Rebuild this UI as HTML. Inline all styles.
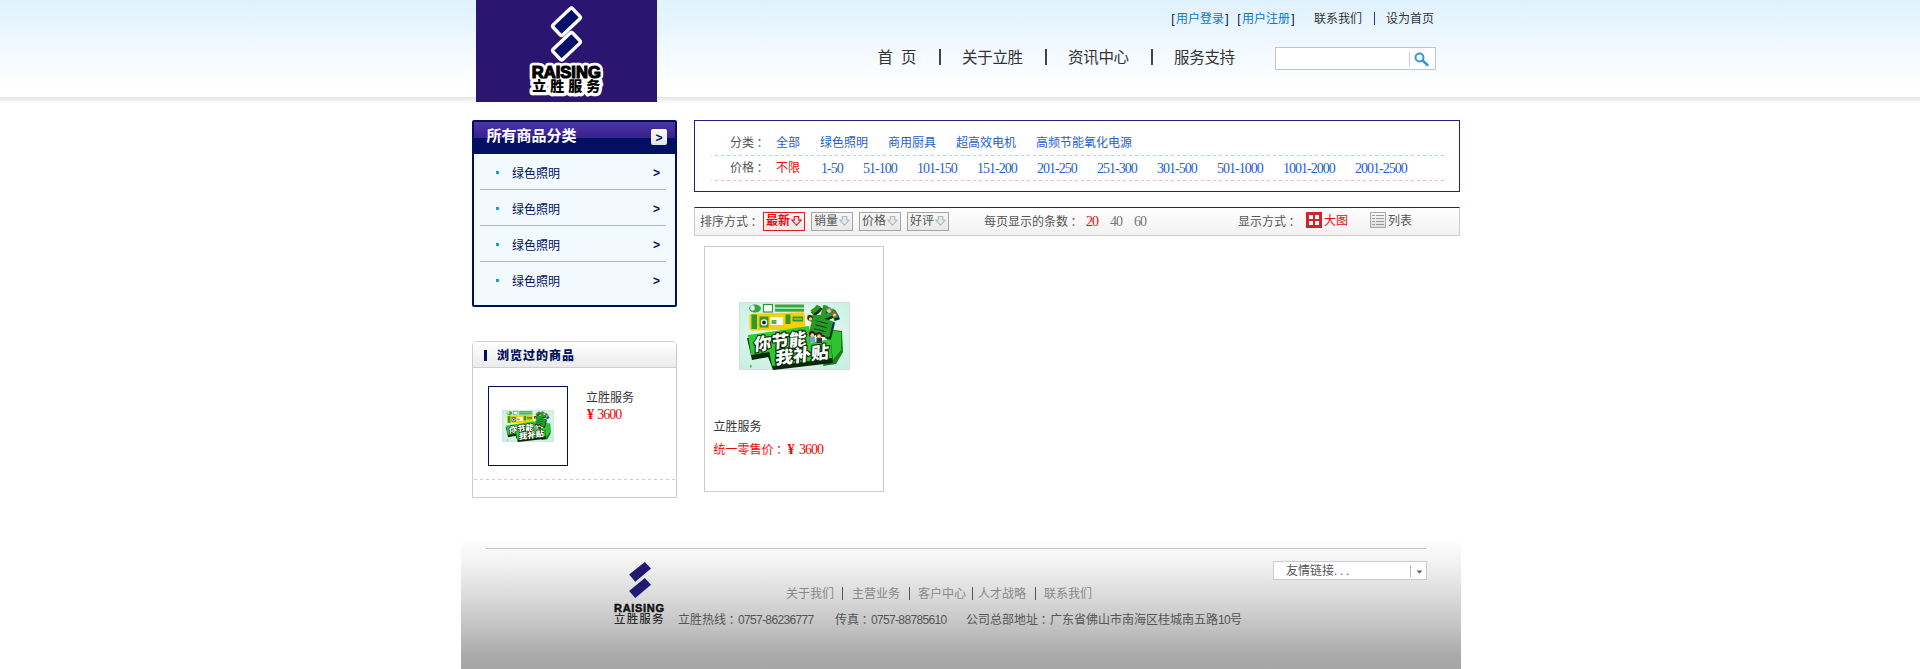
<!DOCTYPE html>
<html lang="zh-CN">
<head>
<meta charset="utf-8">
<title>立胜服务 - 商品列表</title>
<style>
*{margin:0;padding:0;box-sizing:border-box;}
html,body{width:100%;height:669px;overflow:hidden;background:#fff;}
body{font-family:"Liberation Sans","Noto Sans CJK SC",sans-serif;font-size:12px;color:#333;position:relative;}
a{text-decoration:none;color:inherit;}
.abs{position:absolute;white-space:nowrap;}
.serif{font-family:"Liberation Serif","Noto Serif CJK SC",serif;font-size:14px;letter-spacing:-1px;}
#hdr{position:absolute;left:0;top:0;width:100%;height:97px;background:linear-gradient(to bottom,#e0f2fe 0px,#e8f5fe 25px,#f2f9ff 50px,#fbfdff 75px,#ffffff 88px,#ffffff 97px);}
#hdrshadow{position:absolute;left:0;top:97px;width:100%;height:6px;background:linear-gradient(to bottom,#e3e3e3,#f1f1f1 50%,#ffffff);}
#wrap{position:absolute;left:50%;margin-left:-500px;top:0;width:1000px;height:669px;}
/* coordinates inside wrap are page x minus 460 */
#logo{position:absolute;left:16px;top:0;width:181px;height:102px;background:#2a1571;}
.bk{display:inline-block;width:6px;text-align:center;}
.toplinks{top:12px;font-size:12px;line-height:14px;color:#333;}
.nav{top:48px;font-size:15.5px;line-height:20px;color:#333;letter-spacing:-0.3px;}
.navsep{position:absolute;top:49px;width:2px;height:16px;background:#444;}
#search{position:absolute;left:815px;top:47px;width:161px;height:23px;border:1px solid #c4c4c4;background:#fff;}
#search i{position:absolute;left:133px;top:4px;width:1px;height:14px;background:#ccc;}
/* sidebar */
#cat{position:absolute;left:12px;top:120px;width:205px;height:187px;border:2px solid #00105e;border-radius:2px;background:#f2f9ff;}
#cat .hd{position:absolute;left:0;top:0;width:201px;height:32px;background:linear-gradient(to bottom,#4e33a5 0px,#37228e 15.500px,#030f62 16.500px,#030f62 32px);}
#cat .hd b{position:absolute;left:12.500px;top:4px;font-size:15px;line-height:20px;color:#fff;font-weight:bold;}
#cat .hd span{position:absolute;left:177px;top:7px;width:16px;height:16px;border-radius:2px;background:linear-gradient(#fff,#e2e2e2);color:#00105e;font-size:12px;line-height:18px;text-align:center;font-weight:bold;overflow:hidden;}
#cat .it{position:absolute;left:6px;width:186px;height:36px;border-bottom:1px solid #aab3da;}
#cat .it:last-child{border-bottom:none;}
#cat .it i{position:absolute;left:16px;top:17px;width:3px;height:3px;background:#1a9de0;}
#cat .it a{position:absolute;left:32px;top:12px;line-height:16px;color:#00105e;font-size:12px;}
#cat .it em{position:absolute;left:173px;top:11px;line-height:16px;color:#00105e;font-style:normal;font-size:12px;font-weight:bold;}
/* viewed */
#viewed{position:absolute;left:12px;top:341px;width:205px;height:157px;border:1px solid #ccc;border-radius:5px 5px 0 0;background:#fff;}
#viewed .hd{position:absolute;left:0;top:0;width:203px;height:26px;border-bottom:1px solid #d0d0d0;border-radius:4px 4px 0 0;background:linear-gradient(#ffffff,#ebebeb);}
#viewed .hd i{position:absolute;left:11px;top:8px;width:3px;height:11px;background:#00105e;}
#viewed .hd b{position:absolute;left:24px;top:6px;line-height:16px;font-size:12px;color:#00105e;letter-spacing:1px;font-weight:900;}
#viewed .th{position:absolute;left:15px;top:44px;width:80px;height:80px;border:1px solid #00105e;background:#fff;}
#viewed .dash{position:absolute;left:1px;top:137px;width:201px;height:1px;background:repeating-linear-gradient(to right,#cdcdcd 0,#cdcdcd 3px,transparent 3px,transparent 6px);}
/* filter */
#filter{position:absolute;left:234px;top:120px;width:766px;height:72px;border:1px solid #2b1d80;background:#fff;}
#filter .dl{position:absolute;left:16px;width:733px;height:1px;background:repeating-linear-gradient(to right,#f3b4c9 0,#f3b4c9 3px,transparent 3px,transparent 6px);background-position:-2px 0;}
.f1{top:135px;line-height:16px;}
.f2{top:160px;line-height:16px;}
.blue{color:#1c5fd3;}
.red{color:#ee0808;}
.gray{color:#555;}
/* sortbar */
#sort{position:absolute;left:234px;top:207px;width:766px;height:29px;border:1px solid #ccc;border-top:1px solid #2b1d80;background:linear-gradient(#ffffff,#f1f1f1);}
.sbtn{position:absolute;top:212px;width:42px;height:19px;border:1px solid #a4a4a4;background:linear-gradient(#f6f6f6,#e9e9e9);font-size:12px;color:#555;}
.sbtn span{position:absolute;left:2px;top:0px;line-height:16px;white-space:nowrap;}
.sbtn svg{position:absolute;left:27px;top:3px;}
.sbtn.on{border-color:#e21c1c;color:#ee0808;font-weight:bold;}
.s1{top:213px;line-height:16px;}
/* card */
#card{position:absolute;left:244px;top:246px;width:180px;height:246px;border:1px solid #ccc;background:#fff;}
/* footer */
#foot{position:absolute;left:1px;top:539px;width:1000px;height:130px;background:linear-gradient(to bottom,#ffffff 0px,#f9f9f9 9px,#f3f3f3 22px,#dcdcdc 56px,#c0c0c0 91px,#a9a9a9 117px,#a6a6a6 130px);}
#foot .ln{position:absolute;left:25px;top:9px;width:940px;height:1px;background:#c4c4c4;}
#sel{position:absolute;left:813px;top:561px;width:154px;height:19px;border:1px solid #ccc;background:#fff;}
#sel i{position:absolute;left:136px;top:3px;width:1px;height:12px;background:#bbb;}
.num{letter-spacing:-0.670px;}
.cl{position:relative;left:2.500px;}
.yen{font-family:"Liberation Serif",serif;font-size:14px;}
.fsep{position:absolute;top:587px;width:1px;height:13px;background:#555;}
.fl{top:586px;line-height:16px;color:#888;}
.fi{top:612px;line-height:16px;color:#555;}
</style>
</head>
<body>
<div id="hdr"></div>
<div id="hdrshadow"></div>
<div id="wrap">

<div id="logo">
<svg width="181" height="102" viewBox="0 0 181 102">
 <g stroke="#fff" stroke-width="3.400" fill="#06126a">
  <rect x="-13.500" y="-7" width="27" height="14" rx="2" transform="translate(90.500 21.800) rotate(-43.500)"/>
  <rect x="-13.500" y="-7" width="27" height="14" rx="2" transform="translate(90.500 46.200) rotate(-43.500)"/>
 </g>
 <g stroke="#fff" stroke-width="6.500" stroke-linejoin="round" fill="#fff" text-anchor="middle">
  <text x="90.300" y="77.600" font-family="Liberation Sans, sans-serif" font-weight="bold" font-size="17" textLength="69" lengthAdjust="spacingAndGlyphs">RAISING</text>
  <text x="90.300" y="90.800" font-family="Noto Sans CJK SC, sans-serif" font-weight="900" font-size="14" textLength="68" lengthAdjust="spacing">立胜服务</text>
 </g>
 <g fill="#000" text-anchor="middle">
  <text x="90.300" y="77.600" font-family="Liberation Sans, sans-serif" font-weight="bold" font-size="17" stroke="#000" stroke-width="1.200" textLength="69" lengthAdjust="spacingAndGlyphs">RAISING</text>
  <text x="90.300" y="90.800" font-family="Noto Sans CJK SC, sans-serif" font-weight="900" font-size="14" textLength="68" lengthAdjust="spacing">立胜服务</text>
 </g>
</svg>
</div>

<div class="abs toplinks" style="left:710px;color:#00105e"><span class="bk">[</span><a style="color:#0a78c8">用户登录</a><span class="bk">]</span></div>
<div class="abs toplinks" style="left:776px;color:#00105e"><span class="bk">[</span><a style="color:#0a78c8">用户注册</a><span class="bk">]</span></div>
<div class="abs toplinks" style="left:854px">联系我们</div>
<div class="abs" style="left:914px;top:12px;width:1px;height:13px;background:#3a2d8a"></div>
<div class="abs toplinks" style="left:926px">设为首页</div>

<div class="abs nav" style="left:417.500px">首</div><div class="abs nav" style="left:441px">页</div>
<div class="navsep" style="left:479px"></div>
<div class="abs nav" style="left:502px">关于立胜</div>
<div class="navsep" style="left:585px"></div>
<div class="abs nav" style="left:608px">资讯中心</div>
<div class="navsep" style="left:691px"></div>
<div class="abs nav" style="left:714px">服务支持</div>

<div id="search"><i></i>
<svg style="position:absolute;left:137px;top:3px" width="18" height="16" viewBox="0 0 18 16"><circle cx="6.500" cy="6.500" r="4" fill="none" stroke="#3398d6" stroke-width="2"/><path d="M9.500 9.500 L14.500 14" stroke="#3398d6" stroke-width="2.600" stroke-linecap="round"/></svg>
</div>

<!-- sidebar -->
<div id="cat">
 <div class="hd"><b>所有商品分类</b><span>&gt;</span></div>
 <div class="it" style="top:32px"><i></i><a>绿色照明</a><em>&gt;</em></div>
 <div class="it" style="top:68px"><i></i><a>绿色照明</a><em>&gt;</em></div>
 <div class="it" style="top:104px"><i></i><a>绿色照明</a><em>&gt;</em></div>
 <div class="it" style="top:140px"><i></i><a>绿色照明</a><em>&gt;</em></div>
</div>

<div id="viewed">
 <div class="hd"><i></i><b>浏览过的商品</b></div>
 <div class="th"><svg style="position:absolute;left:13px;top:23px" width="52" height="32" viewBox="0 0 111 68" preserveAspectRatio="none">
<defs><radialGradient id="pbg2" cx="0.5" cy="0.45" r="0.7"><stop offset="0" stop-color="#f6fdf9"/><stop offset="1" stop-color="#c6f0df"/></radialGradient></defs>
<rect width="111" height="68" fill="#dcdcdc"/>
<rect x="1" y="1" width="109" height="66" fill="url(#pbg2)"/>
<ellipse cx="16" cy="6.500" rx="6" ry="4" fill="#3aa53a"/><ellipse cx="13.500" cy="6" rx="2.200" ry="2.800" fill="#eaf7ea"/>
<rect x="24.500" y="2.500" width="9" height="7.500" fill="#fff" stroke="#2c9a2c" stroke-width="1.200"/>
<rect x="36" y="2.500" width="29" height="3" fill="#39a83c"/><rect x="36" y="6.700" width="29" height="3" fill="#39a83c"/>
<rect x="10.500" y="11" width="55.500" height="17" rx="2.500" fill="#f2d10a" transform="rotate(-1.500 38 19)"/>
<rect x="12.500" y="12.500" width="5.500" height="14.500" fill="#2f9a2f"/>
<rect x="20.500" y="14.500" width="9" height="11" fill="#2f9a2f"/><circle cx="25" cy="20.500" r="3.200" fill="#fff"/><circle cx="25" cy="20.500" r="1.900" fill="#222"/>
<rect x="31.500" y="15" width="12.500" height="8" fill="#fff"/><rect x="32.500" y="18" width="5" height="4" fill="#55b548"/>
<rect x="46.500" y="12.500" width="5" height="9.500" fill="#2f9a2f"/>
<rect x="53.500" y="14.500" width="10.500" height="5" fill="#2f9a2f"/><rect x="54.500" y="16.500" width="8.500" height="1" fill="#f2d10a"/>
<polygon points="88,27 103,29 104,50 97,62 84,64 88,50" fill="#1d7d1f"/>
<polygon points="90,28 102,30 102,48 94,58 86,60 91,47" fill="#2fc42f"/>
<polygon points="8,36 70,26 72,47 13,58" fill="#072607"/>
<polygon points="28,52 92,40 94,61 34,68" fill="#072607"/>
<polygon points="9,33 70,24 71,43 12,53" fill="#2ecb2e"/>
<polygon points="30,48 92,37 93,56 33,64" fill="#2ecb2e"/>
<text x="84.200" y="31.400" text-anchor="middle" font-family="Noto Sans CJK SC, sans-serif" font-weight="900" font-size="32" fill="#0a2e0e" stroke="#0a2e0e" stroke-width="0.800" transform="rotate(14 82 20)">省</text><text x="82.500" y="30" text-anchor="middle" font-family="Noto Sans CJK SC, sans-serif" font-weight="900" font-size="32" fill="#259a25" transform="rotate(14 82 20)">省</text>
<circle cx="71" cy="16" r="2.800" fill="#3a2a1a"/><circle cx="71.500" cy="17" r="1.700" fill="#f4c9a4"/>
<circle cx="90" cy="8" r="2.800" fill="#8a8a8a"/><circle cx="90" cy="9" r="1.800" fill="#f4c9a4"/>
<circle cx="95.500" cy="12" r="2.600" fill="#a05a20"/><circle cx="95.500" cy="13" r="1.600" fill="#f4c9a4"/>
<circle cx="73" cy="32" r="3" fill="#2a1a10"/><circle cx="73.300" cy="33.200" r="1.900" fill="#f4c9a4"/><rect x="70.500" y="35" width="5.500" height="5" fill="#6aa6c8"/>
<circle cx="80" cy="33" r="3" fill="#3a2418"/><circle cx="80" cy="34.200" r="1.900" fill="#f4c9a4"/><rect x="77.500" y="36" width="5.500" height="5" fill="#333"/>
<g font-family="Noto Sans CJK SC, sans-serif" font-weight="900" fill="#fff" stroke="#072607" stroke-width="2.200" stroke-linejoin="round" paint-order="stroke">
<text x="0" y="0" font-size="17" transform="translate(14.500 49) rotate(-7) skewX(-10)" textLength="53" lengthAdjust="spacingAndGlyphs">你节能</text>
<text x="0" y="0" font-size="17" transform="translate(36 62.500) rotate(-7) skewX(-10)" textLength="54" lengthAdjust="spacingAndGlyphs">我补贴</text>
</g>
<rect x="11" y="63" width="1.500" height="2.500" fill="#5aa83a"/>
</svg></div>
 <div class="abs" style="left:113px;top:48px;line-height:16px;color:#333">立胜服务</div>
 <div class="abs red" style="left:114px;top:65px;line-height:16px"><b class="yen">¥</b> <span class="serif">3600</span></div>
 <div class="dash"></div>
</div>

<!-- filter -->
<div id="filter">
 <div class="dl" style="top:34px"></div>
 <div class="dl" style="top:59px"></div>
</div>
<div class="abs f1 gray" style="left:270px">分类<span class="cl">：</span></div>
<div class="abs f1 blue" style="left:316px">全部</div>
<div class="abs f1 blue" style="left:360px">绿色照明</div>
<div class="abs f1 blue" style="left:428px">商用厨具</div>
<div class="abs f1 blue" style="left:496px">超高效电机</div>
<div class="abs f1 blue" style="left:576px">高频节能氧化电源</div>
<div class="abs f2 gray" style="left:270px">价格<span class="cl">：</span></div>
<div class="abs f2 red" style="left:316px">不限</div>
<div class="abs f2 blue serif" style="left:361px;top:161px">1-50</div>
<div class="abs f2 blue serif" style="left:403px;top:161px">51-100</div>
<div class="abs f2 blue serif" style="left:457px;top:161px">101-150</div>
<div class="abs f2 blue serif" style="left:517px;top:161px">151-200</div>
<div class="abs f2 blue serif" style="left:577px;top:161px">201-250</div>
<div class="abs f2 blue serif" style="left:637px;top:161px">251-300</div>
<div class="abs f2 blue serif" style="left:697px;top:161px">301-500</div>
<div class="abs f2 blue serif" style="left:757px;top:161px">501-1000</div>
<div class="abs f2 blue serif" style="left:823px;top:161px">1001-2000</div>
<div class="abs f2 blue serif" style="left:895px;top:161px">2001-2500</div>

<!-- sort bar -->
<div id="sort"></div>
<div class="abs s1" style="left:240px;top:214px;color:#555">排序方式<span class="cl">：</span></div>
<div class="sbtn on" style="left:303px"><span>最新</span><svg width="11" height="10" viewBox="0 0 12 11"><path d="M3.500 0.500H8.500V4.500H11.200L6 10.200L0.800 4.500H3.500Z" fill="#d6e2ea" stroke="#dc1e1e" stroke-width="1.200"/></svg></div>
<div class="sbtn" style="left:351px"><span>销量</span><svg width="11" height="10" viewBox="0 0 12 11"><path d="M3.500 0.500H8.500V4.500H11.200L6 10.200L0.800 4.500H3.500Z" fill="#e2eaee" stroke="#b9b9b9" stroke-width="1.200"/></svg></div>
<div class="sbtn" style="left:399px"><span>价格</span><svg width="11" height="10" viewBox="0 0 12 11"><path d="M3.500 0.500H8.500V4.500H11.200L6 10.200L0.800 4.500H3.500Z" fill="#e2eaee" stroke="#b9b9b9" stroke-width="1.200"/></svg></div>
<div class="sbtn" style="left:447px"><span>好评</span><svg width="11" height="10" viewBox="0 0 12 11"><path d="M3.500 0.500H8.500V4.500H11.200L6 10.200L0.800 4.500H3.500Z" fill="#e2eaee" stroke="#b9b9b9" stroke-width="1.200"/></svg></div>
<div class="abs s1" style="left:524px;top:214px;color:#555">每页显示的条数<span class="cl">：</span></div>
<div class="abs s1 serif red" style="left:626px;top:214px">20</div>
<div class="abs s1 serif" style="left:650px;top:214px;color:#777">40</div>
<div class="abs s1 serif" style="left:674px;top:214px;color:#777">60</div>
<div class="abs s1" style="left:778px;top:214px;color:#555">显示方式<span class="cl">：</span></div>
<svg class="abs" style="left:846px;top:212px" width="16" height="16" viewBox="0 0 16 16"><rect width="16" height="16" fill="#d0232a"/><rect x="3" y="3" width="4" height="4" fill="#fff"/><rect x="9" y="3" width="4" height="4" fill="#fff"/><rect x="3" y="9" width="4" height="4" fill="#fff"/><rect x="9" y="9" width="4" height="4" fill="#fff"/></svg>
<div class="abs s1" style="left:864px;color:#ee0808">大图</div>
<svg class="abs" style="left:910px;top:212px" width="16" height="16" viewBox="0 0 16 16"><defs><linearGradient id="lg1" x1="0" y1="0" x2="0" y2="1"><stop offset="0" stop-color="#fbfbfb"/><stop offset="1" stop-color="#dcdcdc"/></linearGradient></defs><rect x="0.500" y="0.500" width="15" height="15" fill="url(#lg1)" stroke="#a9a9a9"/><g fill="#9a9a9a"><rect x="2" y="3" width="3" height="1"/><rect x="6" y="3" width="8" height="1"/><rect x="2" y="6" width="3" height="1"/><rect x="6" y="6" width="8" height="1"/><rect x="2" y="9" width="3" height="1"/><rect x="6" y="9" width="8" height="1"/><rect x="2" y="12" width="3" height="1"/><rect x="6" y="12" width="8" height="1"/></g></svg>
<div class="abs s1" style="left:928px;color:#555">列表</div>

<!-- card -->
<div id="card"></div>
<svg class="abs" style="left:279px;top:302px" width="111" height="68" viewBox="0 0 111 68" preserveAspectRatio="none">
<defs><radialGradient id="pbg1" cx="0.5" cy="0.45" r="0.7"><stop offset="0" stop-color="#f6fdf9"/><stop offset="1" stop-color="#c6f0df"/></radialGradient></defs>
<rect width="111" height="68" fill="#dcdcdc"/>
<rect x="1" y="1" width="109" height="66" fill="url(#pbg1)"/>
<ellipse cx="16" cy="6.500" rx="6" ry="4" fill="#3aa53a"/><ellipse cx="13.500" cy="6" rx="2.200" ry="2.800" fill="#eaf7ea"/>
<rect x="24.500" y="2.500" width="9" height="7.500" fill="#fff" stroke="#2c9a2c" stroke-width="1.200"/>
<rect x="36" y="2.500" width="29" height="3" fill="#39a83c"/><rect x="36" y="6.700" width="29" height="3" fill="#39a83c"/>
<rect x="10.500" y="11" width="55.500" height="17" rx="2.500" fill="#f2d10a" transform="rotate(-1.500 38 19)"/>
<rect x="12.500" y="12.500" width="5.500" height="14.500" fill="#2f9a2f"/>
<rect x="20.500" y="14.500" width="9" height="11" fill="#2f9a2f"/><circle cx="25" cy="20.500" r="3.200" fill="#fff"/><circle cx="25" cy="20.500" r="1.900" fill="#222"/>
<rect x="31.500" y="15" width="12.500" height="8" fill="#fff"/><rect x="32.500" y="18" width="5" height="4" fill="#55b548"/>
<rect x="46.500" y="12.500" width="5" height="9.500" fill="#2f9a2f"/>
<rect x="53.500" y="14.500" width="10.500" height="5" fill="#2f9a2f"/><rect x="54.500" y="16.500" width="8.500" height="1" fill="#f2d10a"/>
<polygon points="88,27 103,29 104,50 97,62 84,64 88,50" fill="#1d7d1f"/>
<polygon points="90,28 102,30 102,48 94,58 86,60 91,47" fill="#2fc42f"/>
<polygon points="8,36 70,26 72,47 13,58" fill="#072607"/>
<polygon points="28,52 92,40 94,61 34,68" fill="#072607"/>
<polygon points="9,33 70,24 71,43 12,53" fill="#2ecb2e"/>
<polygon points="30,48 92,37 93,56 33,64" fill="#2ecb2e"/>
<text x="84.200" y="31.400" text-anchor="middle" font-family="Noto Sans CJK SC, sans-serif" font-weight="900" font-size="32" fill="#0a2e0e" stroke="#0a2e0e" stroke-width="0.800" transform="rotate(14 82 20)">省</text><text x="82.500" y="30" text-anchor="middle" font-family="Noto Sans CJK SC, sans-serif" font-weight="900" font-size="32" fill="#259a25" transform="rotate(14 82 20)">省</text>
<circle cx="71" cy="16" r="2.800" fill="#3a2a1a"/><circle cx="71.500" cy="17" r="1.700" fill="#f4c9a4"/>
<circle cx="90" cy="8" r="2.800" fill="#8a8a8a"/><circle cx="90" cy="9" r="1.800" fill="#f4c9a4"/>
<circle cx="95.500" cy="12" r="2.600" fill="#a05a20"/><circle cx="95.500" cy="13" r="1.600" fill="#f4c9a4"/>
<circle cx="73" cy="32" r="3" fill="#2a1a10"/><circle cx="73.300" cy="33.200" r="1.900" fill="#f4c9a4"/><rect x="70.500" y="35" width="5.500" height="5" fill="#6aa6c8"/>
<circle cx="80" cy="33" r="3" fill="#3a2418"/><circle cx="80" cy="34.200" r="1.900" fill="#f4c9a4"/><rect x="77.500" y="36" width="5.500" height="5" fill="#333"/>
<g font-family="Noto Sans CJK SC, sans-serif" font-weight="900" fill="#fff" stroke="#072607" stroke-width="2.200" stroke-linejoin="round" paint-order="stroke">
<text x="0" y="0" font-size="17" transform="translate(14.500 49) rotate(-7) skewX(-10)" textLength="53" lengthAdjust="spacingAndGlyphs">你节能</text>
<text x="0" y="0" font-size="17" transform="translate(36 62.500) rotate(-7) skewX(-10)" textLength="54" lengthAdjust="spacingAndGlyphs">我补贴</text>
</g>
<rect x="11" y="63" width="1.500" height="2.500" fill="#5aa83a"/>
</svg>
<div class="abs" style="left:253.500px;top:419px;line-height:16px;color:#333">立胜服务</div>
<div class="abs red" style="left:253.500px;top:442px;line-height:16px">统一零售价<span class="cl">：</span><b class="yen" style="margin-left:2px">¥</b> <span class="serif" style="margin-left:1px">3600</span></div>

<!-- footer -->
<div id="foot"><div class="ln"></div></div>
<svg class="abs" style="left:145px;top:555px" width="70" height="75" viewBox="0 0 70 75">
 <polygon points="39.800,7 46,13.500 30.300,26.700 24.100,19.600" fill="#211a70"/>
 <polygon points="39.800,23 46,29.700 30.300,42.900 24.100,35.900" fill="#211a70"/>
 <text x="9" y="56.700" font-family="Liberation Sans, sans-serif" font-weight="bold" font-size="11" fill="#111" stroke="#111" stroke-width="0.500" textLength="50" lengthAdjust="spacing">RAISING</text>
 <text x="9" y="68" font-family="Noto Sans CJK SC, sans-serif" font-weight="500" font-size="11.500" fill="#2b2b2b" textLength="49.500" lengthAdjust="spacing">立胜服务</text>
</svg>
<div id="sel"><i></i><svg style="position:absolute;left:142px;top:8px" width="7" height="4" viewBox="0 0 7 4"><path d="M0.500 0.500H6.500L3.500 3.800Z" fill="#666"/></svg></div>
<div class="abs" style="left:826px;top:563px;line-height:16px;color:#555">友情链接<span style="letter-spacing:2.700px">...</span></div>
<div class="abs fl" style="left:326px">关于我们</div>
<div class="fsep" style="left:382px"></div>
<div class="abs fl" style="left:392px">主营业务</div>
<div class="fsep" style="left:449px"></div>
<div class="abs fl" style="left:458px">客户中心</div>
<div class="fsep" style="left:512px"></div>
<div class="abs fl" style="left:518px">人才战略</div>
<div class="fsep" style="left:575px"></div>
<div class="abs fl" style="left:584px">联系我们</div>
<div class="abs fi" style="left:218px">立胜热线<span class="cl">：</span><span class="num">0757-86236777</span></div>
<div class="abs fi" style="left:375px">传真<span class="cl">：</span><span class="num">0757-88785610</span></div>
<div class="abs fi" style="left:506px">公司总部地址<span class="cl">：</span>广东省佛山市南海区桂城南五路<span class="num">10</span>号</div>

</div>
</body>
</html>
